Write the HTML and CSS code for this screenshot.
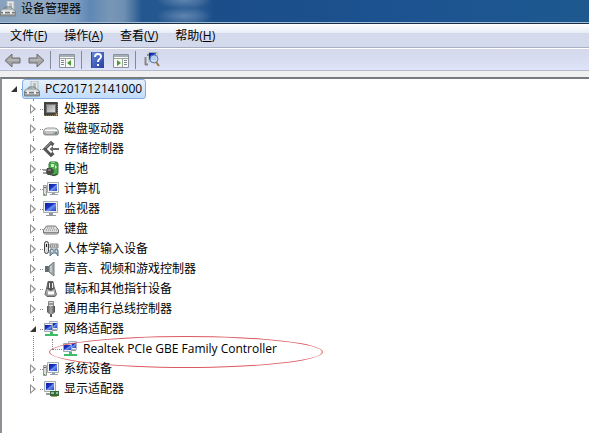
FILE: index.html
```html
<!DOCTYPE html>
<html lang="zh-CN">
<head>
<meta charset="utf-8">
<title>设备管理器</title>
<link rel="stylesheet" href="styles.css">
</head>
<body>
<svg class="defs" aria-hidden="true">
  <defs>
    <linearGradient id="blue" x1="0" y1="0" x2="1" y2="1"><stop offset="0" stop-color="#0a1c9c"/><stop offset=".45" stop-color="#2038c8"/><stop offset=".55" stop-color="#6f92ee"/><stop offset="1" stop-color="#1d3fc4"/></linearGradient>
    <linearGradient id="metal" x1="0" y1="0" x2="0" y2="1"><stop offset="0" stop-color="#f4f4f4"/><stop offset="1" stop-color="#8c8c8c"/></linearGradient>
    <linearGradient id="chip" x1="0" y1="0" x2="1" y2="1"><stop offset="0" stop-color="#9a9a9a"/><stop offset="1" stop-color="#dedede"/></linearGradient>
    <linearGradient id="dark" x1="0" y1="0" x2="1" y2="0"><stop offset="0" stop-color="#555"/><stop offset=".5" stop-color="#aaa"/><stop offset="1" stop-color="#444"/></linearGradient>
    <linearGradient id="help" x1="0" y1="0" x2="1" y2="1"><stop offset="0" stop-color="#6488dc"/><stop offset="1" stop-color="#2440a0"/></linearGradient>
  </defs>
  <symbol id="manager" viewBox="0 0 16 16">
    <path d="M7 0h7v9H7z" fill="#e4e7e8" stroke="#b0b6b8"/><path d="M9 3h3M9 5h3" stroke="#8b9496"/>
    <path d="M4 8l1-2h6l1 2" fill="none" stroke="#69777c"/>
    <path d="M.500 10l2-2h10l3 2v5H.500z" fill="url(#metal)" stroke="#78858a"/><path d="M1 11.500h14" stroke="#6e787c"/><path d="M4 10v3M11 10v3" stroke="#eee" stroke-width="2"/>
  </symbol>
  <symbol id="cpu" viewBox="0 0 16 16">
    <path d="M1 1h14v14H1z" fill="#45433f"/><path d="M1 14.500h14M14.500 1v14" stroke="#8f8257" stroke-dasharray="1 1"/>
    <path d="M3 3h10v9H3z" fill="#777"/><path d="M4 4h8v7H4z" fill="url(#chip)"/><path d="M12 14l2-2v2z" fill="#d5ad45"/>
  </symbol>
  <symbol id="disk" viewBox="0 0 16 16">
    <path d="M.500 10q1-3 4-3h7q3 0 4 3v2q0 2-2 2h-11q-2 0-2-2z" fill="url(#metal)" stroke="#959595"/><path d="M2 9.500h12" stroke="#fff"/><path d="M3 12h7" stroke="#ddd"/><path d="M12 11h2v2h-2z" fill="#6d936c"/>
  </symbol>
  <symbol id="storage" viewBox="0 0 16 16">
    <path d="M10.500 4L8 1.800 1.800 8 8 14.200l2.500-2.200" fill="none" stroke="#555" stroke-width="3"/><path d="M2.500 7L8 1.500" stroke="#aaa"/><path d="M6.500 8L10 5v2h6v2h-6v2z" fill="#6a6a6a"/>
  </symbol>
  <symbol id="battery" viewBox="0 0 16 16">
    <path d="M7 1h6q2 0 2 2v9q0 2-2 2H8q-2 0-2-2V3z" fill="#4aa84c" stroke="#2c7b34"/><path d="M8 0h4v2H8z" fill="#8bbd8b"/><path d="M8 3h3v3H8zM12 4l2 2-2 2z" fill="#d3ebc8"/>
    <path d="M4 7h4q3 1 3 4l-3 3H5q-2-1-2-3z" fill="#474b43"/><path d="M0 9h4M0 12h4" stroke="#444"/><path d="M5 9h3" stroke="#a8ada2"/><path d="M9 14q2 2 5-1" fill="none" stroke="#303830"/>
  </symbol>
  <symbol id="computer" viewBox="0 0 16 16">
    <path d="M4.500 1.500h11v10h-11z" fill="#f3f4f6" stroke="#a5abb2"/><path d="M6 3h8v7H6z" fill="url(#blue)"/><path d="M9 12h3v1H9zM7 13h8v1H7z" fill="#999fa5"/>
    <path d="M.500 4.500h3v10h-3z" fill="#ddd" stroke="#999"/><path d="M1 6.500h2" stroke="#666"/><path d="M1 13h1v1H1z" fill="#409b40"/>
  </symbol>
  <symbol id="monitor" viewBox="0 0 16 16">
    <path d="M.500.500h14v11H.500z" fill="#eee" stroke="#a8acb2"/><path d="M2 2h11v8H2z" fill="url(#blue)"/><path d="M6 12h4v2H6zM3 14h10v1H3z" fill="#91969b"/>
  </symbol>
  <symbol id="keyboard" viewBox="0 0 16 16">
    <path d="M3.500 5h9l3 4v3q-1 1-2 1h-11q-1 0-2-1V9z" fill="#ddd" stroke="#777"/><path d="M4 7h8M3 9h11" stroke="#888" stroke-dasharray="1 1"/><path d="M1 11.500h14" stroke="#888"/>
  </symbol>
  <symbol id="hid" viewBox="0 0 16 16">
    <rect x="1.500" y=".500" width="4" height="12" rx="2" fill="#ddd" stroke="#444"/><path d="M3 3h1v3H3z" fill="#222"/><path d="M7 3h8v4H7z" fill="#ccc" stroke="#888"/><path d="M7 5h8" stroke="#666" stroke-dasharray="1 1"/>
    <path d="M7 15V9q2-2 3 0h2q1-2 3 0v6l-2-3h-3z" fill="#9db0bd" stroke="#597989"/><path d="M8 10h2M13 10h1" stroke="#fff"/>
  </symbol>
  <symbol id="sound" viewBox="0 0 16 16"><path d="M2 5h4v6H2z" fill="#626b71"/><path d="M6 5l5-4v14l-5-4z" fill="#a1a8ac" stroke="#757e83"/><path d="M8 5v6" stroke="#e5e8e9"/></symbol>
  <symbol id="mouse" viewBox="0 0 16 16"><path d="M5 .500h5l1 5 2.500 8-1.500 2H4l-2-2 2-8z" fill="url(#metal)" stroke="#666"/><path d="M5 1h5l1 7-3 2-4-2z" fill="#555"/><path d="M6 2v5h1V2zM9 2v5h1V2z" fill="#eee"/><path d="M5 12h6" stroke="#fff" stroke-width="3"/></symbol>
  <symbol id="usb" viewBox="0 0 16 16"><path d="M5.500.500h5v6h-5z" fill="#ddd" stroke="#888"/><path d="M7 2v2M9 2v2" stroke="#555"/><path d="M4 5h8v6l-2 2H6l-2-2z" fill="url(#dark)"/><path d="M7 13h2v3H7z" fill="#555"/></symbol>
  <symbol id="network" viewBox="0 0 16 16">
    <path d="M6.500.500h8v8h-8z" fill="#eee" stroke="#aab2c0"/><path d="M8 2h6v5H8z" fill="url(#blue)"/><path d="M1.500 2.500h8v8h-8z" fill="#eee" stroke="#9ca6b5"/><path d="M2 4h7v5H2z" fill="url(#blue)"/>
    <path d="M7 11h3v2h5v2H2v-2h5z" fill="#3cbd68"/><path d="M10 9.500h4" stroke="#999"/>
  </symbol>
  <symbol id="display" viewBox="0 0 16 16">
    <path d="M1.500.500h11v10h-11z" fill="#eee" stroke="#a5abb2"/><path d="M3 2h8v7H3z" fill="url(#blue)"/><path d="M3 12h5v2H3z" fill="#999"/><path d="M7 10h9v5H7z" fill="#346c3d"/><path d="M8 11h3v2H8zM13 11h2v2h-2z" fill="#9ebd9c"/><path d="M8 15.500h6" stroke="#a7a45a"/>
  </symbol>
</svg>

<header class="titlebar">
  <svg class="icon"><use href="#manager"/></svg>
  <h1>设备管理器</h1>
</header>

<nav class="menubar" aria-label="菜单">
  <button type="button">文件(<u>F</u>)</button>
  <button type="button">操作(<u>A</u>)</button>
  <button type="button">查看(<u>V</u>)</button>
  <button type="button">帮助(<u>H</u>)</button>
</nav>

<div class="toolbar" role="toolbar" aria-label="工具栏">
  <button type="button" aria-label="后退"><svg viewBox="0 0 18 16"><path d="M1 8.500L8 2v4h8v5H8v4z" fill="#a3a3a3" stroke="#6f6f6f"/><path d="M4 8h11" stroke="#c4c4c4"/></svg></button>
  <button type="button" aria-label="前进"><svg viewBox="0 0 18 16"><path d="M17 8.500L10 2v4H2v5h8v4z" fill="#a3a3a3" stroke="#6f6f6f"/><path d="M3 8h11" stroke="#c4c4c4"/></svg></button>
  <span class="divider"></span>
  <button type="button" aria-label="显示或隐藏控制台树"><svg viewBox="0 0 18 16"><path d="M1.500 2.500h15v13h-15z" fill="#f8f9f6" stroke="#8b929b"/><path d="M2 4h14" stroke="#a5adb7" stroke-width="2"/><path d="M2 6.500h14M7.500 7v8" stroke="#9ca49e"/><path d="M3 8.500h3M3 10.500h3M3 12.500h3" stroke="#7d8790"/><path d="M13 8v6l-4-3z" fill="#4a9a30"/></svg></button>
  <span class="divider"></span>
  <button type="button" aria-label="帮助"><svg viewBox="0 0 18 16"><path d="M2 0h13v16H2z" fill="url(#help)"/><path d="M2.500 0v16" stroke="#2846a3"/><path d="M6 5q0-3 3-3t3 2.500q0 1.500-1.500 2.500T9 10" fill="none" stroke="#fff" stroke-width="2"/><path d="M8 12h2v2H8z" fill="#fff"/></svg></button>
  <button type="button" aria-label="显示或隐藏操作窗格"><svg viewBox="0 0 18 16"><path d="M1.500 2.500h15v13h-15z" fill="#f8f9f6" stroke="#8b929b"/><path d="M2 4h14" stroke="#a5adb7" stroke-width="2"/><path d="M2 6.500h14M10.500 7v8" stroke="#9ca49e"/><path d="M12 8.500h3M12 10.500h3M12 12.500h3" stroke="#7d8790"/><path d="M5 8v6l4-3z" fill="#4a9a30"/></svg></button>
  <span class="divider"></span>
  <button type="button" aria-label="扫描检测硬件改动"><svg viewBox="0 0 18 16"><path d="M2.500 5v8M2 12.500h3M4 3h2" stroke="#888" stroke-width="2" fill="none"/><path d="M6 .500h8v9H6z" fill="#fff" stroke="#9aa"/><path d="M6 1h7v7H6z" fill="url(#blue)"/><circle cx="11" cy="7" r="4" fill="#c8dcf4" fill-opacity=".85" stroke="#5c7eab"/><path d="M13 10l3 4" stroke="#9b7950" stroke-width="2"/></svg></button>
</div>

<main class="pane">
<ul class="tree" role="tree" aria-label="设备">
  <li role="treeitem" aria-expanded="true">
    <div class="row"><button type="button" class="expander open" aria-label="折叠"></button><span class="item selected"><svg class="icon"><use href="#manager"/></svg>PC201712141000</span></div>
    <ul role="group">
      <li role="treeitem"><div class="row"><button type="button" class="expander" aria-label="展开"></button><span class="item"><svg class="icon"><use href="#cpu"/></svg>处理器</span></div></li>
      <li role="treeitem"><div class="row"><button type="button" class="expander" aria-label="展开"></button><span class="item"><svg class="icon"><use href="#disk"/></svg>磁盘驱动器</span></div></li>
      <li role="treeitem"><div class="row"><button type="button" class="expander" aria-label="展开"></button><span class="item"><svg class="icon"><use href="#storage"/></svg>存储控制器</span></div></li>
      <li role="treeitem"><div class="row"><button type="button" class="expander" aria-label="展开"></button><span class="item"><svg class="icon"><use href="#battery"/></svg>电池</span></div></li>
      <li role="treeitem"><div class="row"><button type="button" class="expander" aria-label="展开"></button><span class="item"><svg class="icon"><use href="#computer"/></svg>计算机</span></div></li>
      <li role="treeitem"><div class="row"><button type="button" class="expander" aria-label="展开"></button><span class="item"><svg class="icon"><use href="#monitor"/></svg>监视器</span></div></li>
      <li role="treeitem"><div class="row"><button type="button" class="expander" aria-label="展开"></button><span class="item"><svg class="icon"><use href="#keyboard"/></svg>键盘</span></div></li>
      <li role="treeitem"><div class="row"><button type="button" class="expander" aria-label="展开"></button><span class="item"><svg class="icon"><use href="#hid"/></svg>人体学输入设备</span></div></li>
      <li role="treeitem"><div class="row"><button type="button" class="expander" aria-label="展开"></button><span class="item"><svg class="icon"><use href="#sound"/></svg>声音、视频和游戏控制器</span></div></li>
      <li role="treeitem"><div class="row"><button type="button" class="expander" aria-label="展开"></button><span class="item"><svg class="icon"><use href="#mouse"/></svg>鼠标和其他指针设备</span></div></li>
      <li role="treeitem"><div class="row"><button type="button" class="expander" aria-label="展开"></button><span class="item"><svg class="icon"><use href="#usb"/></svg>通用串行总线控制器</span></div></li>
      <li role="treeitem" aria-expanded="true"><div class="row"><button type="button" class="expander open" aria-label="折叠"></button><span class="item"><svg class="icon"><use href="#network"/></svg>网络适配器</span></div>
        <ul role="group">
          <li role="treeitem"><div class="row leaf"><span class="item marked"><svg class="icon"><use href="#network"/></svg>Realtek PCIe GBE Family Controller</span></div></li>
        </ul>
      </li>
      <li role="treeitem"><div class="row"><button type="button" class="expander" aria-label="展开"></button><span class="item"><svg class="icon"><use href="#computer"/></svg>系统设备</span></div></li>
      <li role="treeitem"><div class="row"><button type="button" class="expander" aria-label="展开"></button><span class="item"><svg class="icon"><use href="#display"/></svg>显示适配器</span></div></li>
    </ul>
  </li>
</ul>
</main>
</body>
</html>
```
FILE: styles.css
```css
* { box-sizing: border-box; }

body {
  margin: 0;
  min-height: 100vh;
  display: flex;
  flex-direction: column;
  background: #f0f0f0;
  color: #000;
  font: 12px/18px "Open Sans", "Noto Sans CJK SC", sans-serif;
}

button {
  border: 0;
  padding: 0;
  background: none;
  color: inherit;
  font: inherit;
}

ul { margin: 0; padding: 0; list-style: none; }

.defs { position: absolute; width: 0; height: 0; }

.icon { width: 16px; height: 16px; flex: none; }

.titlebar {
  display: flex;
  align-items: center;
  gap: 5px;
  height: 24px;
  padding: 0 0 5px;
  border-bottom: 1px solid #17304e;
  box-shadow: inset 0 -1px #a5bdd3;
  background:
    radial-gradient(ellipse 28px 9px at 184px 0, #5f84ae, transparent),
    radial-gradient(ellipse 28px 9px at 184px 16px, #5f84ae, transparent),
    linear-gradient(90deg, #86a2bf 0, #94aac2 40px, #7f9dbf 75px, #5f88b6 90px, #7896b6 110px, #6f90b3 124px, #24568f 142px, #265890 165px, #2f5e94 195px, #1b4d89 215px, #1c5391 70%, #1d598f);
}

.titlebar h1 { margin: 0; font-size: 12px; font-weight: 400; }

.menubar {
  display: flex;
  align-items: center;
  gap: 17px;
  height: 24px;
  padding: 0 10px;
  border-bottom: 1px solid #a9afc0;
  background: linear-gradient(#fff, #e8edf6 9px, #d4daeb 9px, #d3daed);
}

.toolbar {
  display: flex;
  align-items: center;
  gap: 5px;
  height: 23px;
  padding: 0 4px;
  border-top: 1px solid #fff;
  border-bottom: 1px solid #b4bac9;
  background: linear-gradient(#d5d8ea, #d8ddf1 55%, #dfe4fb);
}

.toolbar button, .toolbar svg { display: block; width: 18px; height: 16px; }

.divider { width: 1px; height: 18px; margin-right: 2px; background: #838a99; }

.pane {
  flex: 1;
  margin-top: 6px;
  padding: 0 4px 8px;
  border-top: 2px solid #777b80;
  border-left: 2px solid #8c8f94;
  background: #fff;
}

.tree ul { padding-left: 19px; }

.tree li { position: relative; }

.tree ul > li::before {
  content: "";
  position: absolute;
  top: 0;
  bottom: 0;
  left: 8px;
  border-left: 1px dotted #8a8a8a;
}

.tree ul > li:last-child::before { bottom: auto; height: 10px; }

.row {
  position: relative;
  display: flex;
  align-items: center;
  height: 20px;
}

.row::before {
  content: "";
  position: absolute;
  top: 10px;
  left: 8px;
  width: 10px;
  border-top: 1px dotted #8a8a8a;
}

.leaf { padding-left: 16px; }

.expander {
  position: relative;
  display: grid;
  place-items: center;
  width: 12px;
  height: 14px;
  margin: 0 2px;
  background: #fff;
}

.expander::before {
  content: "";
  width: 6px;
  height: 10px;
  background: #8f8f8f;
  clip-path: polygon(0 0, 100% 50%, 0 100%);
}

.expander::after {
  content: "";
  position: absolute;
  top: 4px;
  left: 4px;
  width: 3px;
  height: 6px;
  background: #fff;
  clip-path: polygon(0 0, 100% 50%, 0 100%);
}

.open::before {
  width: 6px;
  height: 6px;
  background: #333;
  clip-path: polygon(100% 0, 100% 100%, 0 100%);
}

.open::after { display: none; }

.item {
  position: relative;
  display: flex;
  align-items: center;
  gap: 5px;
  height: 20px;
  padding: 0 3px 0 1px;
  border: 1px solid transparent;
  border-radius: 3px;
  white-space: nowrap;
}

.selected {
  border-color: #84acdd;
  background: linear-gradient(#e6f0fc, #c1dcfc);
}

.marked::after {
  content: "";
  position: absolute;
  top: -4px;
  left: -12px;
  width: 272px;
  height: 30px;
  border: 1px solid #dc5a62;
  border-radius: 50%;
}
```
